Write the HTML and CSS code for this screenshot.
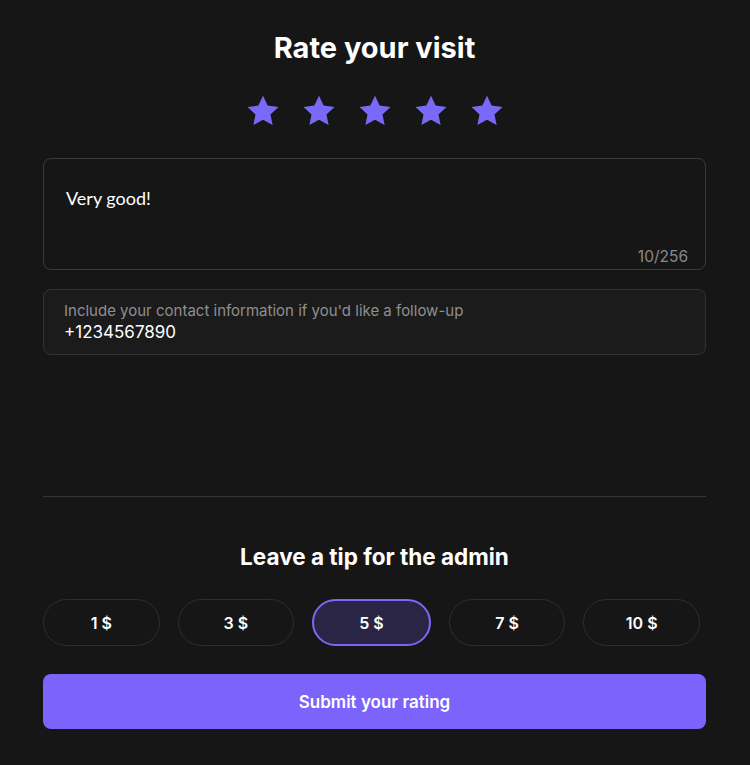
FILE: index.html
```html
<!DOCTYPE html>
<html>
<head>
<meta charset="utf-8">
<link rel="stylesheet" href="styles.css">
</head>
<body>
<div class="page">
  <h1 class="title">Rate your visit</h1>
  <div class="stars">
    <svg class="star" viewBox="0 0 24 24"><path d="M12 1.8l3.1 6.6 7.2.9-5.3 5 1.4 7.1L12 17.9l-6.4 3.5L7 14.3l-5.3-5 7.2-.9z"/></svg>
    <svg class="star" viewBox="0 0 24 24"><path d="M12 1.8l3.1 6.6 7.2.9-5.3 5 1.4 7.1L12 17.9l-6.4 3.5L7 14.3l-5.3-5 7.2-.9z"/></svg>
    <svg class="star" viewBox="0 0 24 24"><path d="M12 1.8l3.1 6.6 7.2.9-5.3 5 1.4 7.1L12 17.9l-6.4 3.5L7 14.3l-5.3-5 7.2-.9z"/></svg>
    <svg class="star" viewBox="0 0 24 24"><path d="M12 1.8l3.1 6.6 7.2.9-5.3 5 1.4 7.1L12 17.9l-6.4 3.5L7 14.3l-5.3-5 7.2-.9z"/></svg>
    <svg class="star" viewBox="0 0 24 24"><path d="M12 1.8l3.1 6.6 7.2.9-5.3 5 1.4 7.1L12 17.9l-6.4 3.5L7 14.3l-5.3-5 7.2-.9z"/></svg>
  </div>
  <div class="review">
    <div class="review-text">Very good!</div>
    <div class="counter">10/256</div>
  </div>
  <div class="contact">
    <div class="contact-label">Include your contact information if you'd like a follow-up</div>
    <div class="contact-value">+1234567890</div>
  </div>
  <div class="spacer"></div>
  <hr class="divider">
  <h2 class="subtitle">Leave a tip for the admin</h2>
  <div class="tips">
    <div class="tip">1 $</div>
    <div class="tip">3 $</div>
    <div class="tip selected">5 $</div>
    <div class="tip">7 $</div>
    <div class="tip">10 $</div>
  </div>
  <div class="submit">Submit your rating</div>
</div>
</body>
</html>
```
FILE: styles.css
```css
html, body {
  margin: 0;
  padding: 0;
  background: #161616;
  color: #ffffff;
}
.page {
  width: 663px;
  margin: 0 0 0 43px;
  padding-top: 27px;
  display: flex;
  flex-direction: column;
  font-family: Inter, "Noto Sans", sans-serif;
}
.title {
  margin: 0;
  text-align: center;
  font-size: 29px;
  font-weight: 700;
  line-height: 42px;
  letter-spacing: 0;
}
.stars {
  display: flex;
  justify-content: center;
  gap: 20px;
  margin-top: 24px;
}
.star {
  width: 36px;
  height: 36px;
  fill: #7a68f6;
}
.review {
  margin-top: 29px;
  height: 110px;
  border: 1px solid #3a3a3a;
  border-radius: 8px;
  position: relative;
}
.review-text {
  font-family: Lato, sans-serif;
  font-size: 18px;
  padding: 28px 22px 0;
  line-height: 22px;
}
.counter {
  position: absolute;
  right: 17px;
  bottom: 3px;
  font-family: Inter, sans-serif;
  font-size: 15.5px;
  color: #8a8a8a;
}
.contact {
  margin-top: 19px;
  border: 1px solid #333333;
  border-radius: 8px;
  background: #1b1b1b;
  padding: 10px 20px 0;
  box-sizing: border-box;
  height: 66px;
  font-family: Inter, sans-serif;
}
.contact-label {
  font-size: 15px;
  color: #8f8f8f;
  line-height: 21px;
}
.contact-value {
  font-size: 17px;
  color: #ffffff;
  line-height: 22px;
}
.spacer {
  height: 141px;
}
.divider {
  margin: 0;
  border: none;
  border-top: 1px solid #363636;
}
.subtitle {
  margin: 36px 0 0;
  text-align: center;
  font-size: 22.5px;
  font-weight: 700;
  line-height: 48px;
}
.tips {
  margin-top: 18px;
  width: 657px;
  display: flex;
  gap: 18px;
}
.tip {
  flex: 1;
  height: 47px;
  border: 1px solid #2e2e2e;
  border-radius: 24px;
  box-sizing: border-box;
  display: flex;
  align-items: center;
  justify-content: center;
  font-size: 16px;
  font-weight: 600;
}
.tip.selected {
  border: 2px solid #7a68f6;
  background: #2b2545;
}
.submit {
  margin-top: 28px;
  height: 55px;
  border-radius: 8px;
  background: #7b63fb;
  display: flex;
  align-items: center;
  justify-content: center;
  font-size: 17px;
  font-weight: 600;
}
```
